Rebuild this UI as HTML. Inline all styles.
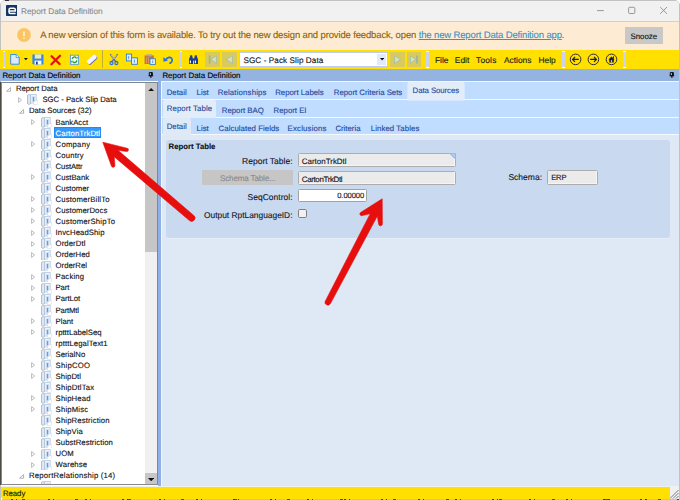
<!DOCTYPE html>
<html><head><meta charset="utf-8"><title>Report Data Definition</title>
<style>
html,body{margin:0;padding:0;}
body{width:680px;height:500px;overflow:hidden;background:#fff;font-family:"Liberation Sans",Arial,sans-serif;font-size:7.8px;color:#000;position:relative;text-rendering:geometricPrecision;}
.a{position:absolute;}
.t{position:absolute;white-space:nowrap;line-height:12px;-webkit-text-stroke:.12px currentColor;}
.msg u{color:#3a92c6;text-decoration-thickness:.7px;text-underline-offset:1.4px;}
#win{left:.8px;top:.9px;width:678.2px;height:498.5px;overflow:hidden;border-radius:4px 4px 0 3.5px;background:#f1f1f1;}
#title{left:0;top:0;width:680px;height:21px;background:#f1f1f1;}
#yl{left:0;top:21px;width:680px;height:1.4px;background:#ffe100;}
#banner{left:0;top:22.3px;width:680px;height:27.5px;background:#fdecd3;}
#snooze{left:625px;top:27px;width:38px;height:16.8px;background:#c8c8c8;}
#tb{left:0;top:49.8px;width:680px;height:18.8px;background:#ffe000;}
.grip{position:absolute;top:51.2px;width:2.1px;margin-left:-.2px;height:17px;background:#cdd1ec;border-top:1px solid #fff;border-bottom:1px solid #fff;box-sizing:border-box}
.dis{position:absolute;top:52px;height:14.6px;background:#d9ca5e;}
.ph{top:68.6px;height:12.4px;background:#95b3e1;}
.ti{position:absolute;}
.sel{position:absolute;width:47.2px;height:11px;background:#3399ff;box-sizing:border-box;border:.6px solid #2389f6;}
.fld{position:absolute;background:#ebebeb;border:.9px solid #acacac;box-sizing:border-box;border-radius:1.5px;box-shadow:inset -.8px -.8px 0 #f9f9f9;}
#status{left:0;top:486.6px;width:669.6px;height:13px;background:#ffe000;}
</style></head><body>
<div class="a" style="left:0;top:0;width:680px;height:500px;background:#fff"></div>
<div class="a" style="left:0;top:0;width:680px;height:510px;box-sizing:border-box;border:.9px solid #c2c2c2;border-radius:5px;"></div>
<div class="a" style="left:4.9px;top:0;width:4px;height:.6px;background:#333"></div>

<div id="win" class="a">
<div class="a" style="left:-.8px;top:-.9px;width:680px;height:500px">

<div id="title" class="a">
 <svg class="a" style="left:6px;top:5px" width="11.4" height="11" viewBox="0 0 11.4 11"><rect width="11.4" height="11" rx=".8" fill="#14375f"/><path d="M3 5.9H9.3V4.7Q9.3 3.3 7.8 3.3H4.5Q3 3.3 3 4.8V7Q3 8.5 4.5 8.5H9.6" fill="none" stroke="#fff" stroke-width="1.5"/></svg>
 <svg class="a" style="left:590px;top:3px" width="86" height="15" viewBox="0 0 86 15"><path d="M7 7.6h6.8" stroke="#8c8c8c" stroke-width=".9"/><rect x="38.6" y="4.3" width="6.2" height="6.2" rx="1" fill="none" stroke="#8c8c8c" stroke-width=".9"/><path d="M70.2 4l6.8 6.8M77 4l-6.8 6.8" stroke="#8c8c8c" stroke-width=".9"/></svg>
</div>
<div id="yl" class="a"></div>
<div id="banner" class="a">
 <svg class="a" style="left:16.6px;top:6.2px" width="14" height="14" viewBox="0 0 14 14"><circle cx="7" cy="7" r="6.9" fill="#fac565"/><path d="M7 3.4v4.6" stroke="#fff" stroke-width="1.2"/><circle cx="7" cy="10" r=".75" fill="#fff"/></svg>
</div>
<div id="snooze" class="a"></div>

<!-- toolbar -->
<div id="tb" class="a"></div>
<div class="grip" style="left:3.4px"></div>
<div class="grip" style="left:180px"></div>
<div class="grip" style="left:426.6px"></div>
<div class="grip" style="left:562.6px"></div>
<div class="grip" style="left:623.6px"></div>
<div class="a" style="left:102.2px;top:50.4px;width:.8px;height:18px;background:#c2ae30"></div>
<div class="dis" style="left:205.2px;width:14.7px"></div>
<div class="dis" style="left:222.1px;width:14.9px"></div>
<div class="dis" style="left:390.1px;width:14.7px"></div>
<div class="dis" style="left:406.6px;width:14.6px"></div>
<div class="a" style="left:238.9px;top:51.7px;width:149.3px;height:15.1px;background:#fff;box-sizing:border-box;border:1px solid #bfcbee;"></div>
<div class="a" style="left:376.6px;top:53.6px;width:9.7px;height:11.8px;background:#e1eafa;"></div>
<svg class="a" style="left:379.8px;top:58.2px" width="4.2" height="2.6" viewBox="0 0 5 3"><path d="M0 0h5L2.5 3z" fill="#111"/></svg>
<svg class="a" style="left:0;top:49px" width="680" height="21" viewBox="0 49 680 21">
<!-- new doc -->
<path d="M10.7 54.5H16.4L19.2 57.3V64.2H10.7Z" fill="#dcebfb" stroke="#3a8ee6" stroke-width="1"/>
<path d="M16.2 54.5V57.5H19.2" fill="#f7fbff" stroke="#3a8ee6" stroke-width=".8"/>
<path d="M23.9 58H27.8L25.85 60.2Z" fill="#111"/>
<!-- save -->
<path d="M32.4 54.4H43.5V64.5H33.6L32.4 63.3Z" fill="#3a86e6"/>
<rect x="34.8" y="54.4" width="6.4" height="4.2" fill="#ecebc6"/>
<rect x="34.6" y="60.6" width="6.8" height="3.9" fill="#f8fbff"/>
<rect x="36" y="61.6" width="1.7" height="2.9" fill="#1d3c78"/>
<!-- red X -->
<path d="M51.6 56.2L59.6 64M60 55.8L51.4 64.2" stroke="#e31212" stroke-width="2.3" stroke-linecap="round" fill="none"/>
<!-- refresh -->
<rect x="70.4" y="55.2" width="8" height="9.1" fill="#fbfdff" stroke="#4a9be8" stroke-width=".9"/>
<path d="M72.2 59a2.3 2.3 0 0 1 4-1.3M76.8 60.4a2.3 2.3 0 0 1-4 1.4" fill="none" stroke="#23a023" stroke-width="1.4"/>
<path d="M75.4 58.6h2.2v-2.2zM73.4 60.8h-2.2v2.2z" fill="#23a023"/>
<!-- eraser -->
<g transform="rotate(-42 92.2 59.8)"><rect x="86.6" y="57.4" width="11.2" height="5" rx="1.6" fill="#6f6da8"/><rect x="86.6" y="56.9" width="11.2" height="4.4" rx="1.5" fill="#f4f4fc"/></g>
<!-- scissors -->
<path d="M110.6 54.6L116 62M117.2 54.6L111.8 62" stroke="#69718c" stroke-width="1.5" stroke-linecap="round"/>
<path d="M111.2 55L114 59M116.6 55L113.8 59" stroke="#dfe4f0" stroke-width=".6"/>
<ellipse cx="111.5" cy="63" rx="1.5" ry="1.7" fill="none" stroke="#2878e0" stroke-width="1.2"/>
<ellipse cx="116.4" cy="63" rx="1.5" ry="1.7" fill="none" stroke="#2878e0" stroke-width="1.2"/>
<!-- copy -->
<rect x="126.4" y="54.1" width="5.2" height="6.8" fill="#e4effb" stroke="#2f7fc6" stroke-width=".9"/>
<rect x="131.6" y="57.8" width="5.8" height="6.5" fill="#e4effb" stroke="#2f7fc6" stroke-width=".9"/>
<path d="M128.6 56v3.2M134.4 59.6v3.2" stroke="#6aa3e6" stroke-width="1.1"/>
<!-- paste -->
<rect x="144.6" y="55.4" width="9.2" height="8.6" fill="#c9713a"/>
<rect x="146.4" y="54.2" width="5.6" height="2.2" fill="#a8a8b8"/>
<path d="M146.4 57.4v6M148.6 57.4v6" stroke="#e6a36a" stroke-width=".8"/>
<rect x="150" y="58.8" width="5.4" height="5.6" fill="#e9f2fc" stroke="#2f7fc6" stroke-width=".9"/>
<path d="M152.7 60.2v2.8" stroke="#6aa3e6" stroke-width="1.1"/>
<!-- undo -->
<path d="M165.4 59.8Q169.2 55.6 171.6 58.4Q173.4 61 170 63.2" fill="none" stroke="#2a6fe0" stroke-width="1.7" stroke-linecap="round"/>
<path d="M163.2 57.2L163.6 61.8L168 60.6Z" fill="#2a6fe0"/>
<!-- binoculars -->
<path d="M189 64V59.6L190 56.4H192.4L193 59.6V64ZM194 64V59.6L194.6 56.4H197L198 59.6V64Z" fill="#1c3a9c"/>
<rect x="190.2" y="55.3" width="2" height="1.6" fill="#1c3a9c"/><rect x="194.8" y="55.3" width="2" height="1.6" fill="#1c3a9c"/>
<rect x="192.6" y="58.4" width="1.8" height="2.2" fill="#1c3a9c"/>
<path d="M190.4 60.4v2.8M195.4 60.4v2.8" stroke="#eef2ff" stroke-width="1.2"/>
<!-- disabled nav -->
<g opacity=".85">
<path d="M209.6 55.4V63.6" stroke="#7fb0c8" stroke-width="1.5"/><path d="M216.4 55.6L211.2 59.5L216.4 63.4Z" fill="#d6e4d0" stroke="#8fb4c4" stroke-width=".7"/>
<path d="M232.4 55.6L226.4 59.5L232.4 63.4Z" fill="#d6e4d0" stroke="#8fb4c4" stroke-width=".7"/>
<path d="M394.6 55.6L400.6 59.5L394.6 63.4Z" fill="#d6e4d0" stroke="#8fb4c4" stroke-width=".7"/>
<path d="M417 55.4V63.6" stroke="#7fb0c8" stroke-width="1.5"/><path d="M410.4 55.6L415.6 59.5L410.4 63.4Z" fill="#d6e4d0" stroke="#8fb4c4" stroke-width=".7"/>
</g>
<!-- nav circles -->
<g fill="none" stroke="#1b1b45" stroke-width=".9">
<circle cx="575.6" cy="59.4" r="5.3"/><circle cx="593.4" cy="59.4" r="5.3"/><circle cx="611.5" cy="59.4" r="5.3"/>
<path d="M578.8 59.4H572.8M575 57L572.6 59.4L575 61.8" stroke-width="1.2"/>
<path d="M590.2 59.4H596.2M594 57L596.4 59.4L594 61.8" stroke-width="1.2"/>
</g>
<path d="M608.4 59.4L611.5 56.4L614.6 59.4H613.8V62.4H609.2V59.4Z" fill="#1b1b45"/>
<rect x="613" y="56.4" width="1" height="2" fill="#1b1b45"/>
<rect x="610.9" y="60.2" width="1.2" height="2.2" fill="#ffe000"/>
</svg>


<!-- panel headers -->
<div class="a ph" style="left:0;width:680px;"></div>
<svg class="a" style="left:147.6px;top:71.8px" width="6" height="6.4" viewBox="0 0 6 6.4"><path d="M1.3 .6h3v3h-3zM.6 3.8h4.6M2.9 3.8v2.3" fill="none" stroke="#0a0a0a" stroke-width="1"/><path d="M3.7 .6v3" stroke="#0a0a0a" stroke-width="1.3"/></svg>
<svg class="a" style="left:668.6px;top:71.8px" width="6" height="6.4" viewBox="0 0 6 6.4"><path d="M1.3 .6h3v3h-3zM.6 3.8h4.6M2.9 3.8v2.3" fill="none" stroke="#0a0a0a" stroke-width="1"/><path d="M3.7 .6v3" stroke="#0a0a0a" stroke-width="1.3"/></svg>

<!-- left panel -->
<div class="a" style="left:0;top:81px;width:161.4px;height:406px;background:#8fb0e6"></div>
<div class="a" style="left:0;top:81px;width:157.6px;height:405.6px;background:#fff"></div>
<div class="a" style="left:0;top:81.8px;width:157.6px;height:403.6px;background:#7f8791"></div>
<div class="a" style="left:0;top:82.8px;width:1.4px;height:402px;background:#5c5850"></div>
<div class="a" style="left:1.8px;top:82.8px;width:143.4px;height:401.6px;background:#fff"></div>
<div class="a" style="left:145.2px;top:82.8px;width:11.8px;height:401.6px;background:#f0f0f0"></div>
<div class="a" style="left:145.2px;top:82.8px;width:11.8px;height:168.8px;background:#c6c6c6"></div>
<div class="a" style="left:145.2px;top:473.2px;width:11.8px;height:11.2px;background:#c6c6c6"></div>
<svg class="a" style="left:147.9px;top:87.8px" width="6.3" height="3.3" viewBox="0 0 5.4 3.2" preserveAspectRatio="none"><path d="M0 3.2L2.7 0L5.4 3.2z" fill="#111"/></svg>
<svg class="a" style="left:147.9px;top:477.6px" width="6.3" height="3.3" viewBox="0 0 5.4 3.2" preserveAspectRatio="none"><path d="M0 0L2.7 3.2L5.4 0z" fill="#111"/></svg>
<svg class="ti" style="left:6.3px;top:87.34px" width="5.2" height="4.8" viewBox="0 0 5.2 4.8"><path d="M4.6 .6 L4.6 4.2 L.6 4.2 Z" fill="#fff" stroke="#a0a0a0" stroke-width=".8"/></svg><span class="t tr" style="top:83px;font-size:7.72px;left:15.9px;color:#111;">Report Data</span>
<svg class="ti" style="left:18.4px;top:96.80px" width="4.4" height="6" viewBox="0 0 4.4 6"><path d="M.6 .6 L3.6 3 L.6 5.4 Z" fill="#fff" stroke="#a8a8a8" stroke-width=".8"/></svg><svg class="ti" style="left:27.3px;top:94.20px" width="10.6" height="10.8" viewBox="0 0 10.6 10.8"><rect x=".5" y=".7" width="3.2" height="9.6" rx="1.2" fill="#dfe8f2" stroke="#97adc8" stroke-width=".75"/><rect x="3.7" y=".6" width="5.5" height="8.4" fill="#f1f5fa" stroke="#adc0d6" stroke-width=".7"/><rect x="6.6" y="6.6" width="3.6" height="3.7" fill="#fff" stroke="#c9d6e6" stroke-width=".5"/><rect x="4.8" y="2.3" width="3.4" height="5.6" fill="#c9daf1"/><path d="M6.5 2.9v4.4" stroke="#6b99de" stroke-width="1.1"/></svg><span class="t tr" style="top:94px;font-size:7.72px;left:42.4px;color:#111;">SGC - Pack Slip Data</span>
<svg class="ti" style="left:19.4px;top:109.46px" width="5.2" height="4.8" viewBox="0 0 5.2 4.8"><path d="M4.6 .6 L4.6 4.2 L.6 4.2 Z" fill="#fff" stroke="#a0a0a0" stroke-width=".8"/></svg><span class="t tr" style="top:105px;font-size:7.72px;left:28.9px;color:#111;">Data Sources (32)</span>
<svg class="ti" style="left:31.4px;top:118.92px" width="4.4" height="6" viewBox="0 0 4.4 6"><path d="M.6 .6 L3.6 3 L.6 5.4 Z" fill="#fff" stroke="#a8a8a8" stroke-width=".8"/></svg><svg class="ti" style="left:41px;top:116.82px" width="10.6" height="10.8" viewBox="0 0 10.6 10.8"><rect x=".5" y=".7" width="3.2" height="9.6" rx="1.2" fill="#dfe8f2" stroke="#97adc8" stroke-width=".75"/><rect x="3.7" y=".6" width="5.5" height="8.4" fill="#f1f5fa" stroke="#adc0d6" stroke-width=".7"/><rect x="6.6" y="6.6" width="3.6" height="3.7" fill="#fff" stroke="#c9d6e6" stroke-width=".5"/><rect x="4.8" y="2.3" width="3.4" height="5.6" fill="#c9daf1"/><path d="M6.5 2.9v4.4" stroke="#6b99de" stroke-width="1.1"/></svg><span class="t tr" style="top:117px;font-size:7.72px;left:55.6px;color:#111;">BankAcct</span>
<svg class="ti" style="left:41px;top:127.88px" width="10.6" height="10.8" viewBox="0 0 10.6 10.8"><rect x=".5" y=".7" width="3.2" height="9.6" rx="1.2" fill="#dfe8f2" stroke="#97adc8" stroke-width=".75"/><rect x="3.7" y=".6" width="5.5" height="8.4" fill="#f1f5fa" stroke="#adc0d6" stroke-width=".7"/><rect x="6.6" y="6.6" width="3.6" height="3.7" fill="#fff" stroke="#c9d6e6" stroke-width=".5"/><rect x="4.8" y="2.3" width="3.4" height="5.6" fill="#c9daf1"/><path d="M6.5 2.9v4.4" stroke="#6b99de" stroke-width="1.1"/></svg><span class="sel" style="left:53.9px;top:126.83px"></span><span class="t tr" style="top:128px;font-size:7.72px;left:55.6px;color:#fff;letter-spacing:0.091px;">CartonTrkDtl</span>
<svg class="ti" style="left:31.4px;top:141.04px" width="4.4" height="6" viewBox="0 0 4.4 6"><path d="M.6 .6 L3.6 3 L.6 5.4 Z" fill="#fff" stroke="#a8a8a8" stroke-width=".8"/></svg><svg class="ti" style="left:41px;top:138.94px" width="10.6" height="10.8" viewBox="0 0 10.6 10.8"><rect x=".5" y=".7" width="3.2" height="9.6" rx="1.2" fill="#dfe8f2" stroke="#97adc8" stroke-width=".75"/><rect x="3.7" y=".6" width="5.5" height="8.4" fill="#f1f5fa" stroke="#adc0d6" stroke-width=".7"/><rect x="6.6" y="6.6" width="3.6" height="3.7" fill="#fff" stroke="#c9d6e6" stroke-width=".5"/><rect x="4.8" y="2.3" width="3.4" height="5.6" fill="#c9daf1"/><path d="M6.5 2.9v4.4" stroke="#6b99de" stroke-width="1.1"/></svg><span class="t tr" style="top:139px;font-size:7.72px;left:55.6px;color:#111;letter-spacing:0.233px;">Company</span>
<svg class="ti" style="left:41px;top:150.00px" width="10.6" height="10.8" viewBox="0 0 10.6 10.8"><rect x=".5" y=".7" width="3.2" height="9.6" rx="1.2" fill="#dfe8f2" stroke="#97adc8" stroke-width=".75"/><rect x="3.7" y=".6" width="5.5" height="8.4" fill="#f1f5fa" stroke="#adc0d6" stroke-width=".7"/><rect x="6.6" y="6.6" width="3.6" height="3.7" fill="#fff" stroke="#c9d6e6" stroke-width=".5"/><rect x="4.8" y="2.3" width="3.4" height="5.6" fill="#c9daf1"/><path d="M6.5 2.9v4.4" stroke="#6b99de" stroke-width="1.1"/></svg><span class="t tr" style="top:150px;font-size:7.72px;left:55.6px;color:#111;letter-spacing:0.167px;">Country</span>
<svg class="ti" style="left:41px;top:161.06px" width="10.6" height="10.8" viewBox="0 0 10.6 10.8"><rect x=".5" y=".7" width="3.2" height="9.6" rx="1.2" fill="#dfe8f2" stroke="#97adc8" stroke-width=".75"/><rect x="3.7" y=".6" width="5.5" height="8.4" fill="#f1f5fa" stroke="#adc0d6" stroke-width=".7"/><rect x="6.6" y="6.6" width="3.6" height="3.7" fill="#fff" stroke="#c9d6e6" stroke-width=".5"/><rect x="4.8" y="2.3" width="3.4" height="5.6" fill="#c9daf1"/><path d="M6.5 2.9v4.4" stroke="#6b99de" stroke-width="1.1"/></svg><span class="t tr" style="top:161px;font-size:7.72px;left:55.6px;color:#111;letter-spacing:-0.143px;">CustAttr</span>
<svg class="ti" style="left:31.4px;top:174.22px" width="4.4" height="6" viewBox="0 0 4.4 6"><path d="M.6 .6 L3.6 3 L.6 5.4 Z" fill="#fff" stroke="#a8a8a8" stroke-width=".8"/></svg><svg class="ti" style="left:41px;top:172.12px" width="10.6" height="10.8" viewBox="0 0 10.6 10.8"><rect x=".5" y=".7" width="3.2" height="9.6" rx="1.2" fill="#dfe8f2" stroke="#97adc8" stroke-width=".75"/><rect x="3.7" y=".6" width="5.5" height="8.4" fill="#f1f5fa" stroke="#adc0d6" stroke-width=".7"/><rect x="6.6" y="6.6" width="3.6" height="3.7" fill="#fff" stroke="#c9d6e6" stroke-width=".5"/><rect x="4.8" y="2.3" width="3.4" height="5.6" fill="#c9daf1"/><path d="M6.5 2.9v4.4" stroke="#6b99de" stroke-width="1.1"/></svg><span class="t tr" style="top:172px;font-size:7.72px;left:55.6px;color:#111;">CustBank</span>
<svg class="ti" style="left:41px;top:183.18px" width="10.6" height="10.8" viewBox="0 0 10.6 10.8"><rect x=".5" y=".7" width="3.2" height="9.6" rx="1.2" fill="#dfe8f2" stroke="#97adc8" stroke-width=".75"/><rect x="3.7" y=".6" width="5.5" height="8.4" fill="#f1f5fa" stroke="#adc0d6" stroke-width=".7"/><rect x="6.6" y="6.6" width="3.6" height="3.7" fill="#fff" stroke="#c9d6e6" stroke-width=".5"/><rect x="4.8" y="2.3" width="3.4" height="5.6" fill="#c9daf1"/><path d="M6.5 2.9v4.4" stroke="#6b99de" stroke-width="1.1"/></svg><span class="t tr" style="top:183px;font-size:7.72px;left:55.6px;color:#111;">Customer</span>
<svg class="ti" style="left:31.4px;top:196.34px" width="4.4" height="6" viewBox="0 0 4.4 6"><path d="M.6 .6 L3.6 3 L.6 5.4 Z" fill="#fff" stroke="#a8a8a8" stroke-width=".8"/></svg><svg class="ti" style="left:41px;top:194.24px" width="10.6" height="10.8" viewBox="0 0 10.6 10.8"><rect x=".5" y=".7" width="3.2" height="9.6" rx="1.2" fill="#dfe8f2" stroke="#97adc8" stroke-width=".75"/><rect x="3.7" y=".6" width="5.5" height="8.4" fill="#f1f5fa" stroke="#adc0d6" stroke-width=".7"/><rect x="6.6" y="6.6" width="3.6" height="3.7" fill="#fff" stroke="#c9d6e6" stroke-width=".5"/><rect x="4.8" y="2.3" width="3.4" height="5.6" fill="#c9daf1"/><path d="M6.5 2.9v4.4" stroke="#6b99de" stroke-width="1.1"/></svg><span class="t tr" style="top:194px;font-size:7.72px;left:55.6px;color:#111;letter-spacing:0.154px;">CustomerBillTo</span>
<svg class="ti" style="left:31.4px;top:207.40px" width="4.4" height="6" viewBox="0 0 4.4 6"><path d="M.6 .6 L3.6 3 L.6 5.4 Z" fill="#fff" stroke="#a8a8a8" stroke-width=".8"/></svg><svg class="ti" style="left:41px;top:205.30px" width="10.6" height="10.8" viewBox="0 0 10.6 10.8"><rect x=".5" y=".7" width="3.2" height="9.6" rx="1.2" fill="#dfe8f2" stroke="#97adc8" stroke-width=".75"/><rect x="3.7" y=".6" width="5.5" height="8.4" fill="#f1f5fa" stroke="#adc0d6" stroke-width=".7"/><rect x="6.6" y="6.6" width="3.6" height="3.7" fill="#fff" stroke="#c9d6e6" stroke-width=".5"/><rect x="4.8" y="2.3" width="3.4" height="5.6" fill="#c9daf1"/><path d="M6.5 2.9v4.4" stroke="#6b99de" stroke-width="1.1"/></svg><span class="t tr" style="top:205px;font-size:7.72px;left:55.6px;color:#111;letter-spacing:0.055px;">CustomerDocs</span>
<svg class="ti" style="left:31.4px;top:218.46px" width="4.4" height="6" viewBox="0 0 4.4 6"><path d="M.6 .6 L3.6 3 L.6 5.4 Z" fill="#fff" stroke="#a8a8a8" stroke-width=".8"/></svg><svg class="ti" style="left:41px;top:216.36px" width="10.6" height="10.8" viewBox="0 0 10.6 10.8"><rect x=".5" y=".7" width="3.2" height="9.6" rx="1.2" fill="#dfe8f2" stroke="#97adc8" stroke-width=".75"/><rect x="3.7" y=".6" width="5.5" height="8.4" fill="#f1f5fa" stroke="#adc0d6" stroke-width=".7"/><rect x="6.6" y="6.6" width="3.6" height="3.7" fill="#fff" stroke="#c9d6e6" stroke-width=".5"/><rect x="4.8" y="2.3" width="3.4" height="5.6" fill="#c9daf1"/><path d="M6.5 2.9v4.4" stroke="#6b99de" stroke-width="1.1"/></svg><span class="t tr" style="top:216px;font-size:7.72px;left:55.6px;color:#111;letter-spacing:0.185px;">CustomerShipTo</span>
<svg class="ti" style="left:31.4px;top:229.52px" width="4.4" height="6" viewBox="0 0 4.4 6"><path d="M.6 .6 L3.6 3 L.6 5.4 Z" fill="#fff" stroke="#a8a8a8" stroke-width=".8"/></svg><svg class="ti" style="left:41px;top:227.42px" width="10.6" height="10.8" viewBox="0 0 10.6 10.8"><rect x=".5" y=".7" width="3.2" height="9.6" rx="1.2" fill="#dfe8f2" stroke="#97adc8" stroke-width=".75"/><rect x="3.7" y=".6" width="5.5" height="8.4" fill="#f1f5fa" stroke="#adc0d6" stroke-width=".7"/><rect x="6.6" y="6.6" width="3.6" height="3.7" fill="#fff" stroke="#c9d6e6" stroke-width=".5"/><rect x="4.8" y="2.3" width="3.4" height="5.6" fill="#c9daf1"/><path d="M6.5 2.9v4.4" stroke="#6b99de" stroke-width="1.1"/></svg><span class="t tr" style="top:227px;font-size:7.72px;left:55.6px;color:#111;letter-spacing:0.073px;">InvcHeadShip</span>
<svg class="ti" style="left:31.4px;top:240.58px" width="4.4" height="6" viewBox="0 0 4.4 6"><path d="M.6 .6 L3.6 3 L.6 5.4 Z" fill="#fff" stroke="#a8a8a8" stroke-width=".8"/></svg><svg class="ti" style="left:41px;top:238.48px" width="10.6" height="10.8" viewBox="0 0 10.6 10.8"><rect x=".5" y=".7" width="3.2" height="9.6" rx="1.2" fill="#dfe8f2" stroke="#97adc8" stroke-width=".75"/><rect x="3.7" y=".6" width="5.5" height="8.4" fill="#f1f5fa" stroke="#adc0d6" stroke-width=".7"/><rect x="6.6" y="6.6" width="3.6" height="3.7" fill="#fff" stroke="#c9d6e6" stroke-width=".5"/><rect x="4.8" y="2.3" width="3.4" height="5.6" fill="#c9daf1"/><path d="M6.5 2.9v4.4" stroke="#6b99de" stroke-width="1.1"/></svg><span class="t tr" style="top:238px;font-size:7.72px;left:55.6px;color:#111;letter-spacing:0.086px;">OrderDtl</span>
<svg class="ti" style="left:31.4px;top:251.64px" width="4.4" height="6" viewBox="0 0 4.4 6"><path d="M.6 .6 L3.6 3 L.6 5.4 Z" fill="#fff" stroke="#a8a8a8" stroke-width=".8"/></svg><svg class="ti" style="left:41px;top:249.54px" width="10.6" height="10.8" viewBox="0 0 10.6 10.8"><rect x=".5" y=".7" width="3.2" height="9.6" rx="1.2" fill="#dfe8f2" stroke="#97adc8" stroke-width=".75"/><rect x="3.7" y=".6" width="5.5" height="8.4" fill="#f1f5fa" stroke="#adc0d6" stroke-width=".7"/><rect x="6.6" y="6.6" width="3.6" height="3.7" fill="#fff" stroke="#c9d6e6" stroke-width=".5"/><rect x="4.8" y="2.3" width="3.4" height="5.6" fill="#c9daf1"/><path d="M6.5 2.9v4.4" stroke="#6b99de" stroke-width="1.1"/></svg><span class="t tr" style="top:249px;font-size:7.72px;left:55.6px;color:#111;letter-spacing:0.057px;">OrderHed</span>
<svg class="ti" style="left:41px;top:260.60px" width="10.6" height="10.8" viewBox="0 0 10.6 10.8"><rect x=".5" y=".7" width="3.2" height="9.6" rx="1.2" fill="#dfe8f2" stroke="#97adc8" stroke-width=".75"/><rect x="3.7" y=".6" width="5.5" height="8.4" fill="#f1f5fa" stroke="#adc0d6" stroke-width=".7"/><rect x="6.6" y="6.6" width="3.6" height="3.7" fill="#fff" stroke="#c9d6e6" stroke-width=".5"/><rect x="4.8" y="2.3" width="3.4" height="5.6" fill="#c9daf1"/><path d="M6.5 2.9v4.4" stroke="#6b99de" stroke-width="1.1"/></svg><span class="t tr" style="top:260px;font-size:7.72px;left:55.6px;color:#111;">OrderRel</span>
<svg class="ti" style="left:31.4px;top:273.76px" width="4.4" height="6" viewBox="0 0 4.4 6"><path d="M.6 .6 L3.6 3 L.6 5.4 Z" fill="#fff" stroke="#a8a8a8" stroke-width=".8"/></svg><svg class="ti" style="left:41px;top:271.66px" width="10.6" height="10.8" viewBox="0 0 10.6 10.8"><rect x=".5" y=".7" width="3.2" height="9.6" rx="1.2" fill="#dfe8f2" stroke="#97adc8" stroke-width=".75"/><rect x="3.7" y=".6" width="5.5" height="8.4" fill="#f1f5fa" stroke="#adc0d6" stroke-width=".7"/><rect x="6.6" y="6.6" width="3.6" height="3.7" fill="#fff" stroke="#c9d6e6" stroke-width=".5"/><rect x="4.8" y="2.3" width="3.4" height="5.6" fill="#c9daf1"/><path d="M6.5 2.9v4.4" stroke="#6b99de" stroke-width="1.1"/></svg><span class="t tr" style="top:271px;font-size:7.72px;left:55.6px;color:#111;letter-spacing:0.167px;">Packing</span>
<svg class="ti" style="left:31.4px;top:284.82px" width="4.4" height="6" viewBox="0 0 4.4 6"><path d="M.6 .6 L3.6 3 L.6 5.4 Z" fill="#fff" stroke="#a8a8a8" stroke-width=".8"/></svg><svg class="ti" style="left:41px;top:282.72px" width="10.6" height="10.8" viewBox="0 0 10.6 10.8"><rect x=".5" y=".7" width="3.2" height="9.6" rx="1.2" fill="#dfe8f2" stroke="#97adc8" stroke-width=".75"/><rect x="3.7" y=".6" width="5.5" height="8.4" fill="#f1f5fa" stroke="#adc0d6" stroke-width=".7"/><rect x="6.6" y="6.6" width="3.6" height="3.7" fill="#fff" stroke="#c9d6e6" stroke-width=".5"/><rect x="4.8" y="2.3" width="3.4" height="5.6" fill="#c9daf1"/><path d="M6.5 2.9v4.4" stroke="#6b99de" stroke-width="1.1"/></svg><span class="t tr" style="top:282px;font-size:7.72px;left:55.6px;color:#111;letter-spacing:-0.133px;">Part</span>
<svg class="ti" style="left:31.4px;top:295.88px" width="4.4" height="6" viewBox="0 0 4.4 6"><path d="M.6 .6 L3.6 3 L.6 5.4 Z" fill="#fff" stroke="#a8a8a8" stroke-width=".8"/></svg><svg class="ti" style="left:41px;top:293.78px" width="10.6" height="10.8" viewBox="0 0 10.6 10.8"><rect x=".5" y=".7" width="3.2" height="9.6" rx="1.2" fill="#dfe8f2" stroke="#97adc8" stroke-width=".75"/><rect x="3.7" y=".6" width="5.5" height="8.4" fill="#f1f5fa" stroke="#adc0d6" stroke-width=".7"/><rect x="6.6" y="6.6" width="3.6" height="3.7" fill="#fff" stroke="#c9d6e6" stroke-width=".5"/><rect x="4.8" y="2.3" width="3.4" height="5.6" fill="#c9daf1"/><path d="M6.5 2.9v4.4" stroke="#6b99de" stroke-width="1.1"/></svg><span class="t tr" style="top:293px;font-size:7.72px;left:55.6px;color:#111;letter-spacing:-0.067px;">PartLot</span>
<svg class="ti" style="left:41px;top:304.84px" width="10.6" height="10.8" viewBox="0 0 10.6 10.8"><rect x=".5" y=".7" width="3.2" height="9.6" rx="1.2" fill="#dfe8f2" stroke="#97adc8" stroke-width=".75"/><rect x="3.7" y=".6" width="5.5" height="8.4" fill="#f1f5fa" stroke="#adc0d6" stroke-width=".7"/><rect x="6.6" y="6.6" width="3.6" height="3.7" fill="#fff" stroke="#c9d6e6" stroke-width=".5"/><rect x="4.8" y="2.3" width="3.4" height="5.6" fill="#c9daf1"/><path d="M6.5 2.9v4.4" stroke="#6b99de" stroke-width="1.1"/></svg><span class="t tr" style="top:305px;font-size:7.72px;left:55.6px;color:#111;letter-spacing:-0.167px;">PartMtl</span>
<svg class="ti" style="left:31.4px;top:318.00px" width="4.4" height="6" viewBox="0 0 4.4 6"><path d="M.6 .6 L3.6 3 L.6 5.4 Z" fill="#fff" stroke="#a8a8a8" stroke-width=".8"/></svg><svg class="ti" style="left:41px;top:315.90px" width="10.6" height="10.8" viewBox="0 0 10.6 10.8"><rect x=".5" y=".7" width="3.2" height="9.6" rx="1.2" fill="#dfe8f2" stroke="#97adc8" stroke-width=".75"/><rect x="3.7" y=".6" width="5.5" height="8.4" fill="#f1f5fa" stroke="#adc0d6" stroke-width=".7"/><rect x="6.6" y="6.6" width="3.6" height="3.7" fill="#fff" stroke="#c9d6e6" stroke-width=".5"/><rect x="4.8" y="2.3" width="3.4" height="5.6" fill="#c9daf1"/><path d="M6.5 2.9v4.4" stroke="#6b99de" stroke-width="1.1"/></svg><span class="t tr" style="top:316px;font-size:7.72px;left:55.6px;color:#111;">Plant</span>
<svg class="ti" style="left:31.4px;top:329.06px" width="4.4" height="6" viewBox="0 0 4.4 6"><path d="M.6 .6 L3.6 3 L.6 5.4 Z" fill="#fff" stroke="#a8a8a8" stroke-width=".8"/></svg><svg class="ti" style="left:41px;top:326.96px" width="10.6" height="10.8" viewBox="0 0 10.6 10.8"><rect x=".5" y=".7" width="3.2" height="9.6" rx="1.2" fill="#dfe8f2" stroke="#97adc8" stroke-width=".75"/><rect x="3.7" y=".6" width="5.5" height="8.4" fill="#f1f5fa" stroke="#adc0d6" stroke-width=".7"/><rect x="6.6" y="6.6" width="3.6" height="3.7" fill="#fff" stroke="#c9d6e6" stroke-width=".5"/><rect x="4.8" y="2.3" width="3.4" height="5.6" fill="#c9daf1"/><path d="M6.5 2.9v4.4" stroke="#6b99de" stroke-width="1.1"/></svg><span class="t tr" style="top:327px;font-size:7.72px;left:55.6px;color:#111;">rptttLabelSeq</span>
<svg class="ti" style="left:41px;top:338.02px" width="10.6" height="10.8" viewBox="0 0 10.6 10.8"><rect x=".5" y=".7" width="3.2" height="9.6" rx="1.2" fill="#dfe8f2" stroke="#97adc8" stroke-width=".75"/><rect x="3.7" y=".6" width="5.5" height="8.4" fill="#f1f5fa" stroke="#adc0d6" stroke-width=".7"/><rect x="6.6" y="6.6" width="3.6" height="3.7" fill="#fff" stroke="#c9d6e6" stroke-width=".5"/><rect x="4.8" y="2.3" width="3.4" height="5.6" fill="#c9daf1"/><path d="M6.5 2.9v4.4" stroke="#6b99de" stroke-width="1.1"/></svg><span class="t tr" style="top:338px;font-size:7.72px;left:55.6px;color:#111;letter-spacing:0.1px;">rptttLegalText1</span>
<svg class="ti" style="left:41px;top:349.08px" width="10.6" height="10.8" viewBox="0 0 10.6 10.8"><rect x=".5" y=".7" width="3.2" height="9.6" rx="1.2" fill="#dfe8f2" stroke="#97adc8" stroke-width=".75"/><rect x="3.7" y=".6" width="5.5" height="8.4" fill="#f1f5fa" stroke="#adc0d6" stroke-width=".7"/><rect x="6.6" y="6.6" width="3.6" height="3.7" fill="#fff" stroke="#c9d6e6" stroke-width=".5"/><rect x="4.8" y="2.3" width="3.4" height="5.6" fill="#c9daf1"/><path d="M6.5 2.9v4.4" stroke="#6b99de" stroke-width="1.1"/></svg><span class="t tr" style="top:349px;font-size:7.72px;left:55.6px;color:#111;">SerialNo</span>
<svg class="ti" style="left:31.4px;top:362.24px" width="4.4" height="6" viewBox="0 0 4.4 6"><path d="M.6 .6 L3.6 3 L.6 5.4 Z" fill="#fff" stroke="#a8a8a8" stroke-width=".8"/></svg><svg class="ti" style="left:41px;top:360.14px" width="10.6" height="10.8" viewBox="0 0 10.6 10.8"><rect x=".5" y=".7" width="3.2" height="9.6" rx="1.2" fill="#dfe8f2" stroke="#97adc8" stroke-width=".75"/><rect x="3.7" y=".6" width="5.5" height="8.4" fill="#f1f5fa" stroke="#adc0d6" stroke-width=".7"/><rect x="6.6" y="6.6" width="3.6" height="3.7" fill="#fff" stroke="#c9d6e6" stroke-width=".5"/><rect x="4.8" y="2.3" width="3.4" height="5.6" fill="#c9daf1"/><path d="M6.5 2.9v4.4" stroke="#6b99de" stroke-width="1.1"/></svg><span class="t tr" style="top:360px;font-size:7.72px;left:55.6px;color:#111;letter-spacing:0.233px;">ShipCOO</span>
<svg class="ti" style="left:31.4px;top:373.30px" width="4.4" height="6" viewBox="0 0 4.4 6"><path d="M.6 .6 L3.6 3 L.6 5.4 Z" fill="#fff" stroke="#a8a8a8" stroke-width=".8"/></svg><svg class="ti" style="left:41px;top:371.20px" width="10.6" height="10.8" viewBox="0 0 10.6 10.8"><rect x=".5" y=".7" width="3.2" height="9.6" rx="1.2" fill="#dfe8f2" stroke="#97adc8" stroke-width=".75"/><rect x="3.7" y=".6" width="5.5" height="8.4" fill="#f1f5fa" stroke="#adc0d6" stroke-width=".7"/><rect x="6.6" y="6.6" width="3.6" height="3.7" fill="#fff" stroke="#c9d6e6" stroke-width=".5"/><rect x="4.8" y="2.3" width="3.4" height="5.6" fill="#c9daf1"/><path d="M6.5 2.9v4.4" stroke="#6b99de" stroke-width="1.1"/></svg><span class="t tr" style="top:371px;font-size:7.72px;left:55.6px;color:#111;letter-spacing:0.1px;">ShipDtl</span>
<svg class="ti" style="left:41px;top:382.26px" width="10.6" height="10.8" viewBox="0 0 10.6 10.8"><rect x=".5" y=".7" width="3.2" height="9.6" rx="1.2" fill="#dfe8f2" stroke="#97adc8" stroke-width=".75"/><rect x="3.7" y=".6" width="5.5" height="8.4" fill="#f1f5fa" stroke="#adc0d6" stroke-width=".7"/><rect x="6.6" y="6.6" width="3.6" height="3.7" fill="#fff" stroke="#c9d6e6" stroke-width=".5"/><rect x="4.8" y="2.3" width="3.4" height="5.6" fill="#c9daf1"/><path d="M6.5 2.9v4.4" stroke="#6b99de" stroke-width="1.1"/></svg><span class="t tr" style="top:382px;font-size:7.72px;left:55.6px;color:#111;letter-spacing:0.178px;">ShipDtlTax</span>
<svg class="ti" style="left:31.4px;top:395.42px" width="4.4" height="6" viewBox="0 0 4.4 6"><path d="M.6 .6 L3.6 3 L.6 5.4 Z" fill="#fff" stroke="#a8a8a8" stroke-width=".8"/></svg><svg class="ti" style="left:41px;top:393.32px" width="10.6" height="10.8" viewBox="0 0 10.6 10.8"><rect x=".5" y=".7" width="3.2" height="9.6" rx="1.2" fill="#dfe8f2" stroke="#97adc8" stroke-width=".75"/><rect x="3.7" y=".6" width="5.5" height="8.4" fill="#f1f5fa" stroke="#adc0d6" stroke-width=".7"/><rect x="6.6" y="6.6" width="3.6" height="3.7" fill="#fff" stroke="#c9d6e6" stroke-width=".5"/><rect x="4.8" y="2.3" width="3.4" height="5.6" fill="#c9daf1"/><path d="M6.5 2.9v4.4" stroke="#6b99de" stroke-width="1.1"/></svg><span class="t tr" style="top:393px;font-size:7.72px;left:55.6px;color:#111;letter-spacing:0.143px;">ShipHead</span>
<svg class="ti" style="left:31.4px;top:406.48px" width="4.4" height="6" viewBox="0 0 4.4 6"><path d="M.6 .6 L3.6 3 L.6 5.4 Z" fill="#fff" stroke="#a8a8a8" stroke-width=".8"/></svg><svg class="ti" style="left:41px;top:404.38px" width="10.6" height="10.8" viewBox="0 0 10.6 10.8"><rect x=".5" y=".7" width="3.2" height="9.6" rx="1.2" fill="#dfe8f2" stroke="#97adc8" stroke-width=".75"/><rect x="3.7" y=".6" width="5.5" height="8.4" fill="#f1f5fa" stroke="#adc0d6" stroke-width=".7"/><rect x="6.6" y="6.6" width="3.6" height="3.7" fill="#fff" stroke="#c9d6e6" stroke-width=".5"/><rect x="4.8" y="2.3" width="3.4" height="5.6" fill="#c9daf1"/><path d="M6.5 2.9v4.4" stroke="#6b99de" stroke-width="1.1"/></svg><span class="t tr" style="top:404px;font-size:7.72px;left:55.6px;color:#111;letter-spacing:0.171px;">ShipMisc</span>
<svg class="ti" style="left:41px;top:415.44px" width="10.6" height="10.8" viewBox="0 0 10.6 10.8"><rect x=".5" y=".7" width="3.2" height="9.6" rx="1.2" fill="#dfe8f2" stroke="#97adc8" stroke-width=".75"/><rect x="3.7" y=".6" width="5.5" height="8.4" fill="#f1f5fa" stroke="#adc0d6" stroke-width=".7"/><rect x="6.6" y="6.6" width="3.6" height="3.7" fill="#fff" stroke="#c9d6e6" stroke-width=".5"/><rect x="4.8" y="2.3" width="3.4" height="5.6" fill="#c9daf1"/><path d="M6.5 2.9v4.4" stroke="#6b99de" stroke-width="1.1"/></svg><span class="t tr" style="top:415px;font-size:7.72px;left:55.6px;color:#111;letter-spacing:0.143px;">ShipRestriction</span>
<svg class="ti" style="left:41px;top:426.50px" width="10.6" height="10.8" viewBox="0 0 10.6 10.8"><rect x=".5" y=".7" width="3.2" height="9.6" rx="1.2" fill="#dfe8f2" stroke="#97adc8" stroke-width=".75"/><rect x="3.7" y=".6" width="5.5" height="8.4" fill="#f1f5fa" stroke="#adc0d6" stroke-width=".7"/><rect x="6.6" y="6.6" width="3.6" height="3.7" fill="#fff" stroke="#c9d6e6" stroke-width=".5"/><rect x="4.8" y="2.3" width="3.4" height="5.6" fill="#c9daf1"/><path d="M6.5 2.9v4.4" stroke="#6b99de" stroke-width="1.1"/></svg><span class="t tr" style="top:426px;font-size:7.72px;left:55.6px;color:#111;letter-spacing:0.117px;">ShipVia</span>
<svg class="ti" style="left:41px;top:437.56px" width="10.6" height="10.8" viewBox="0 0 10.6 10.8"><rect x=".5" y=".7" width="3.2" height="9.6" rx="1.2" fill="#dfe8f2" stroke="#97adc8" stroke-width=".75"/><rect x="3.7" y=".6" width="5.5" height="8.4" fill="#f1f5fa" stroke="#adc0d6" stroke-width=".7"/><rect x="6.6" y="6.6" width="3.6" height="3.7" fill="#fff" stroke="#c9d6e6" stroke-width=".5"/><rect x="4.8" y="2.3" width="3.4" height="5.6" fill="#c9daf1"/><path d="M6.5 2.9v4.4" stroke="#6b99de" stroke-width="1.1"/></svg><span class="t tr" style="top:437px;font-size:7.72px;left:55.6px;color:#111;letter-spacing:0.073px;">SubstRestriction</span>
<svg class="ti" style="left:31.4px;top:450.72px" width="4.4" height="6" viewBox="0 0 4.4 6"><path d="M.6 .6 L3.6 3 L.6 5.4 Z" fill="#fff" stroke="#a8a8a8" stroke-width=".8"/></svg><svg class="ti" style="left:41px;top:448.62px" width="10.6" height="10.8" viewBox="0 0 10.6 10.8"><rect x=".5" y=".7" width="3.2" height="9.6" rx="1.2" fill="#dfe8f2" stroke="#97adc8" stroke-width=".75"/><rect x="3.7" y=".6" width="5.5" height="8.4" fill="#f1f5fa" stroke="#adc0d6" stroke-width=".7"/><rect x="6.6" y="6.6" width="3.6" height="3.7" fill="#fff" stroke="#c9d6e6" stroke-width=".5"/><rect x="4.8" y="2.3" width="3.4" height="5.6" fill="#c9daf1"/><path d="M6.5 2.9v4.4" stroke="#6b99de" stroke-width="1.1"/></svg><span class="t tr" style="top:448px;font-size:7.72px;left:55.6px;color:#111;">UOM</span>
<svg class="ti" style="left:31.4px;top:461.78px" width="4.4" height="6" viewBox="0 0 4.4 6"><path d="M.6 .6 L3.6 3 L.6 5.4 Z" fill="#fff" stroke="#a8a8a8" stroke-width=".8"/></svg><svg class="ti" style="left:41px;top:459.68px" width="10.6" height="10.8" viewBox="0 0 10.6 10.8"><rect x=".5" y=".7" width="3.2" height="9.6" rx="1.2" fill="#dfe8f2" stroke="#97adc8" stroke-width=".75"/><rect x="3.7" y=".6" width="5.5" height="8.4" fill="#f1f5fa" stroke="#adc0d6" stroke-width=".7"/><rect x="6.6" y="6.6" width="3.6" height="3.7" fill="#fff" stroke="#c9d6e6" stroke-width=".5"/><rect x="4.8" y="2.3" width="3.4" height="5.6" fill="#c9daf1"/><path d="M6.5 2.9v4.4" stroke="#6b99de" stroke-width="1.1"/></svg><span class="t tr" style="top:459px;font-size:7.72px;left:55.6px;color:#111;letter-spacing:0.15px;">Warehse</span>
<svg class="ti" style="left:19.4px;top:474.44px" width="5.2" height="4.8" viewBox="0 0 5.2 4.8"><path d="M4.6 .6 L4.6 4.2 L.6 4.2 Z" fill="#fff" stroke="#a0a0a0" stroke-width=".8"/></svg><span class="t tr" style="top:470px;font-size:7.72px;left:29.1px;color:#111;letter-spacing:0.205px;">ReportRelationship (14)</span>
<svg class="ti" style="left:40.6px;top:481.30px" width="10.6" height="10.8" viewBox="0 0 10.6 10.8"><rect x=".5" y=".7" width="3.2" height="9.6" rx="1.2" fill="#dfe8f2" stroke="#97adc8" stroke-width=".75"/><rect x="3.7" y=".6" width="5.5" height="8.4" fill="#f1f5fa" stroke="#adc0d6" stroke-width=".7"/><rect x="6.6" y="6.6" width="3.6" height="3.7" fill="#fff" stroke="#c9d6e6" stroke-width=".5"/><rect x="4.8" y="2.3" width="3.4" height="5.6" fill="#c9daf1"/><path d="M6.5 2.9v4.4" stroke="#6b99de" stroke-width="1.1"/></svg><span class="t tr" style="top:482px;font-size:7.72px;left:55.6px;color:#111;">CartonTrkDtl</span>
<div class="a" style="left:0;top:484.2px;width:157.4px;height:1.1px;background:#8a8a8a"></div>
<div class="a" style="left:0;top:485.3px;width:157.4px;height:1.3px;background:#fff"></div>

<!-- right panel -->
<div class="a" style="left:161.4px;top:81px;width:520px;height:405.6px;background:#f2f7fe"></div>
<div class="a" style="left:162.1px;top:81.8px;width:520px;height:403.8px;background:#dfe9f5"></div>
<div class="a" style="left:162.1px;top:81.8px;width:520px;height:53px;background:#c0dcff"></div>
<div class="a" style="left:162.1px;top:98.8px;width:520px;height:.9px;background:#f4f9ff"></div>
<div class="a" style="left:162.1px;top:116.9px;width:520px;height:.9px;background:#f4f9ff"></div>
<div class="a" style="left:162.1px;top:134.4px;width:520px;height:.9px;background:#f4f9ff"></div>
<!-- selected tabs -->
<div class="a" style="left:408px;top:82.2px;width:56px;height:17.5px;background:#e3edfa;border-radius:2.5px 2.5px 0 0;box-shadow:0 0 0 .5px #eef4fd"></div>
<div class="a" style="left:163.2px;top:100.4px;width:52.7px;height:17.4px;background:#e3edfa;border-radius:2px 2px 0 0"></div>
<div class="a" style="left:163.2px;top:118.4px;width:27.4px;height:17px;background:#e0eaf6;border-radius:2px 2px 0 0"></div>

<!-- group box -->
<div class="a" style="left:165.8px;top:140.4px;width:504.4px;height:98px;background:#c9daf0;border-radius:2.5px;box-shadow:0 .7px 0 #e9f0fa"></div>
<div class="fld" style="left:297.8px;top:153.3px;width:157.8px;height:13.8px;"></div>
<svg class="a" style="left:448.8px;top:153.2px" width="6.8" height="6.8" viewBox="0 0 6.8 6.8"><path d="M0 0H6.8V6.8z" fill="#c9daf0"/><path d="M.6 .2H6.6V6.2z" fill="#b2c7ec" stroke="#8caee2" stroke-width=".8"/></svg>
<div class="a" style="left:202.2px;top:170.2px;width:91.3px;height:14.9px;background:#c6c6c6;"></div>
<div class="fld" style="left:297.8px;top:171.3px;width:157.8px;height:13.8px;"></div>
<div class="fld" style="left:297.8px;top:188.9px;width:69.1px;height:12.8px;background:#fff;border-color:#a2a2a2;box-shadow:none"></div>
<div class="a" style="left:298.1px;top:208.8px;width:8.8px;height:8.8px;box-sizing:border-box;border:.9px solid #808080;background:#f1f1f1;border-radius:1.8px"></div>
<div class="fld" style="left:547px;top:170px;width:51px;height:14.6px;"></div>

<span class="t" style="top:5px;font-size:8.3px;left:21px;color:#8d8d8d;">Report Data Definition</span>
<span class="t msg" style="top:30px;font-size:9.5px;left:40.2px;color:#8f5f06;letter-spacing:-0.14px;">A new version of this form is available. To try out the new design and provide feedback, open <u>the new Report Data Definition app</u>.</span>
<span class="t" style="top:31px;font-size:7.9px;left:543.8px;width:200px;text-align:center;color:#111;">Snooze</span>
<span class="t" style="top:55px;font-size:8.17px;left:243.4px;color:#111;letter-spacing:0.08px;">SGC - Pack Slip Data</span>
<span class="t" style="top:54px;font-size:8.4px;left:435px;color:#1a1a1a;">File</span>
<span class="t" style="top:54px;font-size:8.4px;left:454.8px;color:#1a1a1a;">Edit</span>
<span class="t" style="top:54px;font-size:8.4px;left:476px;color:#1a1a1a;letter-spacing:0.2px;">Tools</span>
<span class="t" style="top:54px;font-size:8.4px;left:504px;color:#1a1a1a;">Actions</span>
<span class="t" style="top:54px;font-size:8.4px;left:538.5px;color:#1a1a1a;">Help</span>
<span class="t" style="top:70px;font-size:7.95px;left:2.4px;color:#000;">Report Data Definition</span>
<span class="t" style="top:70px;font-size:7.95px;left:162.4px;color:#000;">Report Data Definition</span>
<span class="t" style="top:87px;font-size:7.8px;left:166.7px;color:#1e489a;">Detail</span>
<span class="t" style="top:87px;font-size:7.8px;left:196.6px;color:#1e489a;">List</span>
<span class="t" style="top:87px;font-size:7.8px;left:217.7px;color:#1e489a;letter-spacing:0.16px;">Relationships</span>
<span class="t" style="top:87px;font-size:7.8px;left:275.2px;color:#1e489a;">Report Labels</span>
<span class="t" style="top:87px;font-size:7.8px;left:333.8px;color:#1e489a;">Report Criteria Sets</span>
<span class="t" style="top:85px;font-size:7.8px;left:412.6px;color:#1e489a;letter-spacing:-0.07px;">Data Sources</span>
<span class="t" style="top:103px;font-size:7.8px;left:166.7px;color:#1e489a;letter-spacing:0.12px;">Report Table</span>
<span class="t" style="top:105px;font-size:7.8px;left:221.8px;color:#1e489a;">Report BAQ</span>
<span class="t" style="top:105px;font-size:7.8px;left:273.6px;color:#1e489a;">Report EI</span>
<span class="t" style="top:121px;font-size:7.8px;left:166.7px;color:#1e489a;">Detail</span>
<span class="t" style="top:123px;font-size:7.8px;left:196.6px;color:#1e489a;">List</span>
<span class="t" style="top:123px;font-size:7.8px;left:218.6px;color:#1e489a;letter-spacing:0.05px;">Calculated Fields</span>
<span class="t" style="top:123px;font-size:7.8px;left:287.6px;color:#1e489a;letter-spacing:0.18px;">Exclusions</span>
<span class="t" style="top:123px;font-size:7.8px;left:335.4px;color:#1e489a;">Criteria</span>
<span class="t" style="top:123px;font-size:7.8px;left:370.8px;color:#1e489a;letter-spacing:0.08px;">Linked Tables</span>
<span class="t" style="top:141px;font-size:7.75px;left:168.6px;color:#111;font-weight:bold;">Report Table</span>
<span class="t" style="top:155px;font-size:8.5px;right:387.5px;color:#15151f;">Report Table:</span>
<span class="t" style="top:191px;font-size:8.5px;right:387.5px;color:#15151f;">SeqControl:</span>
<span class="t" style="top:209px;font-size:8.4px;right:387.5px;color:#15151f;">Output RptLanguageID:</span>
<span class="t" style="top:171px;font-size:8.5px;right:138.0px;color:#15151f;">Schema:</span>
<span class="t" style="top:156px;font-size:7.96px;left:301.8px;color:#111;">CartonTrkDtl</span>
<span class="t" style="top:174px;font-size:7.9px;left:301.8px;color:#111;letter-spacing:-0.34px;">CartonTrkDtl</span>
<span class="t" style="top:190px;font-size:7.6px;right:316.0px;color:#111;letter-spacing:-0.1px;">0.00000</span>
<span class="t" style="top:172px;font-size:7.6px;left:551.2px;color:#111;letter-spacing:-0.15px;">ERP</span>
<span class="t" style="top:173px;font-size:8.2px;left:147.6px;width:200px;text-align:center;color:#8c8c8c;letter-spacing:-0.22px;">Schema Table...</span>

<!-- status -->
<div class="a" style="left:0;top:485.8px;width:680px;height:14px;background:#f0f0f0"></div>
<div id="status" class="a"></div>
<span class="t" style="top:488px;font-size:7.75px;left:2.9px;color:#111;">Ready</span>
<svg class="a" style="left:670px;top:489px" width="9" height="10" viewBox="0 0 9 10"><path d="M0 9.5L8.5 1M3 9.5L8.5 4M6 9.5L8.5 7" stroke="#707070" stroke-width=".9"/></svg>

<!-- arrows -->
<svg class="a" style="left:0;top:0" width="680" height="500" viewBox="0 0 680 500"><g fill="#e70e0e" stroke="#e70e0e" stroke-width=".6" stroke-linejoin="round">
<path d="M115.1 147.79L193.78 215.45A3.35 3.35 0 0 1 189.42 220.55L110.3 153.41Z"/>
<path d="M102.8 142.2L127 148.2A1.65 1.65 0 0 1 126.6 151.5L118 150.3L114 154.2L114.9 165A1.8 1.8 0 0 1 111.3 165.8Z"/>
<path d="M378.98 212.92L330.32 303.82A2.85 2.85 0 0 1 325.28 301.18L372.42 209.48Z"/>
<path d="M382.2 198.8L361 212.2A1.8 1.8 0 0 0 362.4 215.6L371 213.4L377.2 215.2L378.6 224A1.9 1.9 0 0 0 382.4 223.8Z"/>
</g></svg>

</div></div>
<div class="a" style="left:0;top:82.4px;width:1.3px;height:403px;background:#4e4b46"></div>
<div class="a" style="left:0;top:49.8px;width:1px;height:18.8px;background:#ffe000"></div>
<div class="a" style="left:0;top:68.6px;width:1px;height:13px;background:#95b3e1"></div>
<div class="a" style="left:1.5px;top:498.9px;width:677px;height:1.1px;background:repeating-linear-gradient(90deg,transparent 0 9px,#4a4528 9px 11px,transparent 11px 14px,#4a4528 14px 15.5px,transparent 15.5px 37px),repeating-linear-gradient(90deg,transparent 0 20px,#5a5430 20px 23px,transparent 23px 53px),#cfc77a"></div>
</body></html>
